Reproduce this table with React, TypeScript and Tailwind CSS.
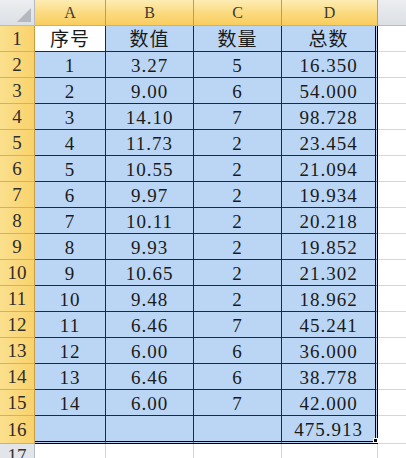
import React from "react"

const rows: string[][] = [
  ["序号", "数值", "数量", "总数"],
  ["1", "3.27", "5", "16.350"],
  ["2", "9.00", "6", "54.000"],
  ["3", "14.10", "7", "98.728"],
  ["4", "11.73", "2", "23.454"],
  ["5", "10.55", "2", "21.094"],
  ["6", "9.97", "2", "19.934"],
  ["7", "10.11", "2", "20.218"],
  ["8", "9.93", "2", "19.852"],
  ["9", "10.65", "2", "21.302"],
  ["10", "9.48", "2", "18.962"],
  ["11", "6.46", "7", "45.241"],
  ["12", "6.00", "6", "36.000"],
  ["13", "6.46", "6", "38.778"],
  ["14", "6.00", "7", "42.000"],
  ["", "", "", "475.913"],
]

const font = "font-['Liberation_Serif','Noto_Sans_CJK_SC',serif]"

export default function App() {
  return (
    <div className={`relative h-[458px] w-[406px] overflow-hidden bg-white ${font}`}>
      <div className="grid grid-cols-[35px_71px_88px_88px_96px_1fr]">
        {/* column headers */}
        <div className="flex h-[26px] items-end justify-end border-r border-b border-[#b7bcc4] bg-gradient-to-b from-[#eceef1] to-[#dcdfe4] p-[3px]">
          <svg width="14" height="14" viewBox="0 0 14 14">
            <polygon points="14,0 14,14 0,14" fill="#b4b9c0" />
          </svg>
        </div>
        {["A", "B", "C", "D"].map((c) => (
          <div
            key={c}
            className="flex h-[26px] items-center justify-center border-r border-b border-r-[#c79d3f] border-b-[#d9b24f] bg-gradient-to-b from-[#fdedb3] via-[#fbdb81] to-[#f8cd5d] text-[16px] text-[#3a3a3a]"
          >
            {c}
          </div>
        ))}
        <div className="h-[26px] border-b border-[#b7bcc4] bg-gradient-to-b from-[#eceef1] to-[#dcdfe4]" />

        {rows.map((r, i) => {
          const last = i === rows.length - 1
          const h = last ? "h-[28px]" : "h-[26px]"
          const bb = last ? "border-b-[3px] border-double border-b-black" : "border-b border-b-[#0f2c52]"
          return (
            <React.Fragment key={i}>
              <div
                className={`flex ${h} items-center justify-center border-r border-b border-r-[#c79d3f] border-b-[#d9b24f] bg-gradient-to-r from-[#fbe08e] to-[#f9d26a] text-[19px] leading-none text-[#2d2d2d]`}
              >
                {i + 1}
              </div>
              {r.map((v, j) => {
                const isD = j === 3
                const white = i === 0 && j === 0
                return (
                  <div
                    key={j}
                    className={`flex ${h} items-center justify-center ${bb} ${
                      isD ? "border-r-[3px] border-double border-r-black" : "border-r border-r-[#0f2c52]"
                    } ${white ? "bg-white" : "bg-[#bad6f4]"} pt-[2px] text-[19px] leading-none tracking-[1px] text-[#1a1a1a]`}
                  >
                    {v}
                  </div>
                )
              })}
              <div className={`${h} border-b border-b-[#d4d7dc] bg-white`} />
            </React.Fragment>
          )
        })}

        {/* row 17 */}
        <div className="flex h-[26px] items-start justify-center border-r border-[#b7bcc4] bg-[#e2e5e9] pt-[2px] text-[19px] leading-none text-[#333]">
          17
        </div>
        <div className="h-[26px] border-r border-[#d4d7dc]" />
        <div className="h-[26px] border-r border-[#d4d7dc]" />
        <div className="h-[26px] border-r border-[#d4d7dc]" />
        <div className="h-[26px] border-r border-[#d4d7dc]" />
        <div className="h-[26px]" />
      </div>

      {/* fill handle */}
      <div className="absolute left-[373px] top-[438px] h-[5px] w-[5px] border border-white bg-black" />
    </div>
  )
}
